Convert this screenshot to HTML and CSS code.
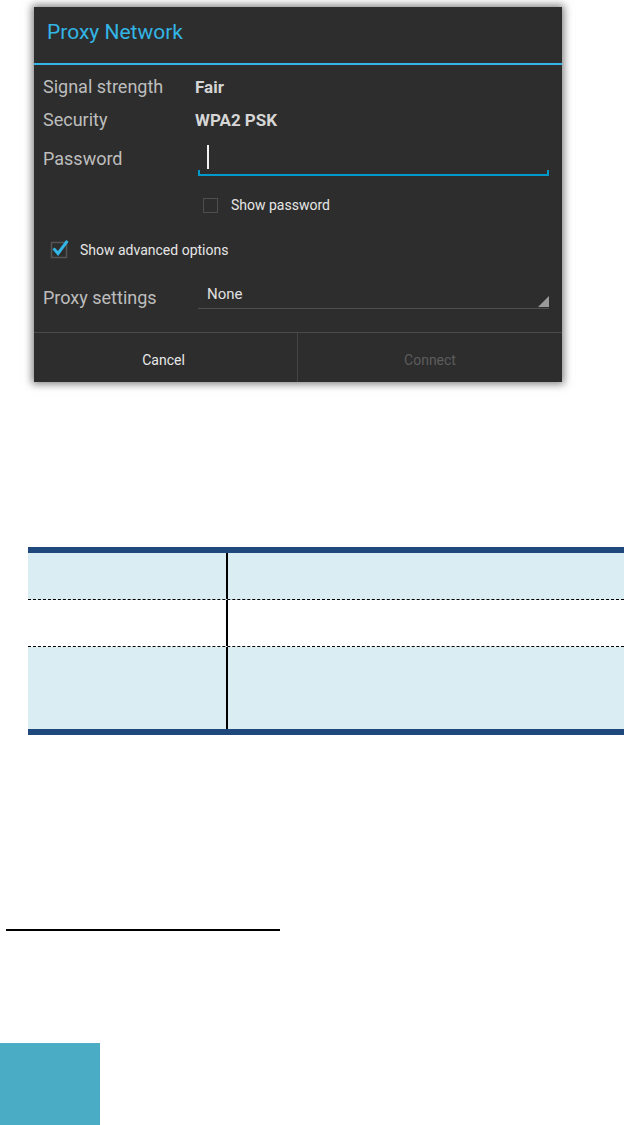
FILE: index.html
```html
<!DOCTYPE html>
<html>
<head>
<meta charset="utf-8">
<title>Proxy Network</title>
<link rel="stylesheet" href="styles.css">
</head>
<body>
<div class="dialog">
  <div class="dlg-header"><span class="dlg-title">Proxy Network</span></div>
  <div class="dlg-body">
    <div class="row info">
      <span class="label">Signal strength</span>
      <span class="value">Fair</span>
    </div>
    <div class="row info">
      <span class="label">Security</span>
      <span class="value">WPA2 PSK</span>
    </div>
    <div class="row pw-row">
      <span class="label wide">Password</span>
      <div class="input"><span class="cursor"></span></div>
    </div>
    <div class="row check-row show-pw">
      <span class="box"></span>
      <span class="check-text">Show password</span>
    </div>
    <div class="row check-row adv">
      <svg class="checked" width="20" height="20" viewBox="0 0 20 20">
        <rect x="1.5" y="3.5" width="15" height="15" fill="none" stroke="#555" stroke-width="1.5"/>
        <path d="M4.5 10.5 L8 14.5 L16.5 3" fill="none" stroke="#33b5e5" stroke-width="3" stroke-linecap="square"/>
      </svg>
      <span class="check-text">Show advanced options</span>
    </div>
    <div class="row proxy-row">
      <span class="label wide">Proxy settings</span>
      <div class="spinner"><span class="spinner-text">None</span></div>
    </div>
  </div>
  <div class="dlg-footer">
    <div class="btn cancel">Cancel</div>
    <div class="btn disabled">Connect</div>
  </div>
</div>

<div class="table">
  <div class="trow shaded"><div class="cell c1"></div><div class="cell c2"></div></div>
  <div class="trow"><div class="cell c1"></div><div class="cell c2"></div></div>
  <div class="trow shaded tall"><div class="cell c1"></div><div class="cell c2"></div></div>
</div>

<div class="rule"></div>

<div class="teal-box"></div>
</body>
</html>
```

FILE: styles.css
```css
html, body {
  margin: 0;
  padding: 0;
  background: #ffffff;
}

body {
  width: 624px;
  height: 1125px;
  overflow: hidden;
  font-family: Roboto, "Liberation Sans", sans-serif;
}

.dialog {
  margin: 7px 0 0 34px;
  width: 528px;
  height: 375px;
  background: #2d2d2d;
  box-shadow: 0 0 8px 2px rgba(0, 0, 0, 0.5);
  display: flex;
  flex-direction: column;
}

.dlg-header {
  height: 50px;
  padding: 0 0 6px 13px;
  display: flex;
  align-items: center;
  border-bottom: 2px solid #33b5e5;
}

.dlg-title {
  color: #33b5e5;
  font-size: 21px;
}

.dlg-body {
  padding: 5px 13px 18px 9px;
  display: flex;
  flex-direction: column;
}

.row {
  display: flex;
  align-items: center;
}

.info {
  height: 33px;
}

.label {
  width: 152px;
  flex: none;
  color: #bdbdbd;
  font-size: 18px;
}

.label.wide {
  width: 155px;
}

.value {
  color: #d6d6d6;
  font-size: 17px;
  font-weight: 700;
}

.pw-row {
  padding-top: 8px;
  height: 32px;
  align-items: stretch;
}

.pw-row .label {
  line-height: 30px;
}

.input {
  position: relative;
  flex: 1;
  height: 30px;
  border-bottom: 2px solid #0099cc;
  padding-left: 9px;
}

.input::before,
.input::after {
  content: "";
  position: absolute;
  bottom: -2px;
  width: 2px;
  height: 6px;
  background: #0099cc;
}

.input::before { left: 0; }
.input::after { right: 0; }

.cursor {
  display: block;
  width: 2px;
  height: 24px;
  margin-top: 1px;
  background: #f2f2f2;
}

.check-row {
  height: 34px;
}

.show-pw {
  margin-top: 12px;
  padding-left: 160px;
}

.box {
  width: 13px;
  height: 13px;
  border: 1.5px solid #4e4e4e;
  flex: none;
}

.check-text {
  color: #e6e6e6;
  font-size: 14px;
  margin-left: 13px;
}

.adv {
  margin-top: 11px;
  padding-left: 7px;
}

.adv .checked {
  flex: none;
  margin-top: -3px;
}

.adv .check-text {
  margin-left: 10px;
}

.proxy-row {
  margin-top: 13px;
  height: 34px;
}

.spinner {
  position: relative;
  flex: 1;
  align-self: flex-start;
  height: 28px;
  border-bottom: 1px solid #4f4f4f;
  display: flex;
  align-items: center;
  padding-left: 9px;
}

.spinner-text {
  color: #e0e0e0;
  font-size: 15px;
}

.spinner::after {
  content: "";
  position: absolute;
  right: 0;
  bottom: 1px;
  width: 0;
  height: 0;
  border-left: 11px solid transparent;
  border-bottom: 11px solid #9a9a9a;
}

.dlg-footer {
  display: grid;
  grid-template-columns: 263px 1fr;
  border-top: 1px solid #4a4a4a;
  height: 49px;
}

.btn {
  display: flex;
  align-items: center;
  justify-content: center;
  padding-top: 5px;
  color: #e8e8e8;
  font-size: 14px;
}

.btn.cancel {
  padding-right: 4px;
}

.btn + .btn {
  border-left: 1px solid #444444;
}

.btn.disabled {
  color: #5c5c5c;
}

.table {
  margin: 165px 0 0 28px;
  width: 596px;
  border-top: 6px solid #1f497d;
  border-bottom: 6px solid #1f497d;
}

.trow {
  display: flex;
  height: 46px;
  border-bottom: 1px dashed #000000;
}

.trow:last-child {
  border-bottom: none;
  height: 82px;
}

.trow.shaded {
  background: #daedf3;
}

.cell.c1 {
  width: 198px;
  flex: none;
}

.cell.c2 {
  flex: 1;
  border-left: 2px solid #000000;
}

.rule {
  margin: 194px 0 0 6px;
  width: 274px;
  height: 2px;
  background: #000000;
}

.teal-box {
  margin-top: 112px;
  width: 100px;
  height: 82px;
  background: #4bacc6;
}
```
